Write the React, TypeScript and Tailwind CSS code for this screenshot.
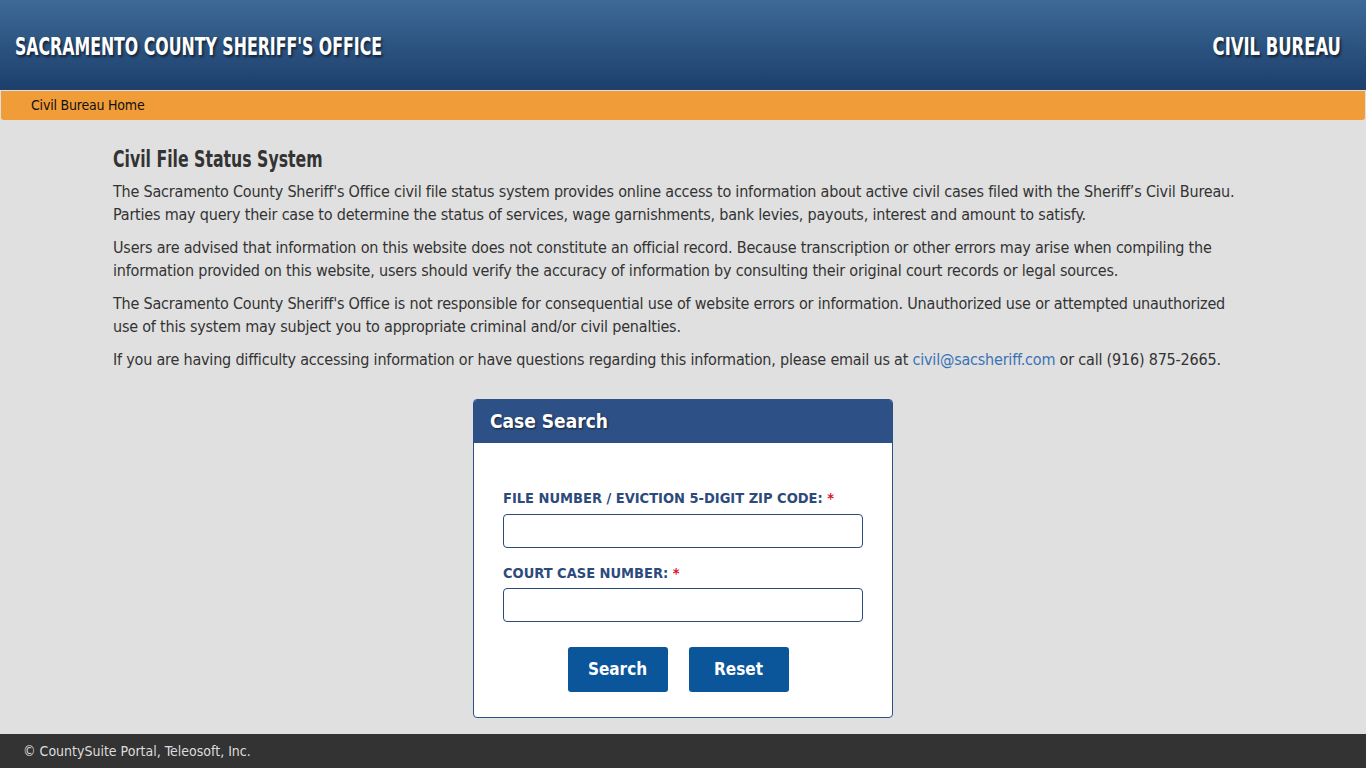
export default function App() {
  const head = { fontFamily: '"DejaVu Sans Condensed", "DejaVu Sans", sans-serif' }
  const body = { fontFamily: '"DejaVu Sans Condensed", "DejaVu Sans", sans-serif' }

  return (
    <div className="min-h-screen flex flex-col bg-[#e0e0e0] text-[#333]" style={body}>
      <header className="h-[90px] flex items-center justify-between px-[15px] pt-[3px] bg-gradient-to-b from-[#3e6a97] to-[#1c3f6c]">
        <div className="inline-block origin-left scale-x-[0.73] whitespace-nowrap text-white text-[24px] font-bold [text-shadow:2px_2px_3px_rgba(0,0,0,0.6)]" style={head}>
          SACRAMENTO COUNTY SHERIFF'S OFFICE
        </div>
        <div className="inline-block origin-right scale-x-[0.76] whitespace-nowrap text-white text-[24px] font-bold pr-[13px] [text-shadow:2px_2px_3px_rgba(0,0,0,0.6)]" style={head}>
          CIVIL BUREAU
        </div>
      </header>

      <nav className="mx-[1px] mt-[1px] h-[29px] flex items-center px-[30px] bg-[#f09c39] rounded-b-[3px] text-[14px] tracking-[-0.2px] text-[#111]">
        <a href="#">Civil Bureau Home</a>
      </nav>

      <main className="flex-1 w-[1140px] mx-auto pt-[24px] pb-[16px]">
        <h1 className="inline-block origin-left scale-x-[0.76] whitespace-nowrap text-[23px] font-bold text-[#333] leading-[30px] mb-[6px]" style={head}>
          Civil File Status System
        </h1>
        <p className="text-[16px] tracking-[-0.2px] leading-[23px] mb-[10px]">
          The Sacramento County Sheriff's Office civil file status system provides online access to information about active civil cases filed with the Sheriff’s Civil Bureau. Parties may query their case to determine the status of services, wage garnishments, bank levies, payouts, interest and amount to satisfy.
        </p>
        <p className="text-[16px] tracking-[-0.2px] leading-[23px] mb-[10px]">
          Users are advised that information on this website does not constitute an official record. Because transcription or other errors may arise when compiling the information provided on this website, users should verify the accuracy of information by consulting their original court records or legal sources.
        </p>
        <p className="text-[16px] tracking-[-0.2px] leading-[23px] mb-[10px]">
          The Sacramento County Sheriff's Office is not responsible for consequential use of website errors or information. Unauthorized use or attempted unauthorized use of this system may subject you to appropriate criminal and/or civil penalties.
        </p>
        <p className="text-[16px] tracking-[-0.2px] leading-[23px]">
          If you are having difficulty accessing information or have questions regarding this information, please email us at{' '}
          <a href="#" className="text-[#3a73b5]">civil@sacsheriff.com</a> or call (916) 875-2665.
        </p>

        <div className="w-[420px] mx-auto mt-[28px] rounded-[4px] border border-[#2d5087] bg-white overflow-hidden">
          <div className="h-[43px] bg-[#2d5087] flex items-center px-[16px] text-white text-[19px] font-bold [text-shadow:1px_1px_2px_rgba(0,0,0,0.6)]">
            Case Search
          </div>
          <div className="px-[29px] pt-[46px] pb-[25px]">
            <label className="block text-[14.5px] leading-[18px] font-bold text-[#2c4a7c] mb-[7px]">
              FILE NUMBER / EVICTION 5-DIGIT ZIP CODE: <span className="text-[#e0102b]">*</span>
            </label>
            <input className="block w-[360px] h-[34px] rounded-[4px] border border-[#2c4a7c] bg-white mb-[16px]" />
            <label className="block text-[14.5px] leading-[18px] font-bold text-[#2c4a7c] mb-[6px]">
              COURT CASE NUMBER: <span className="text-[#e0102b]">*</span>
            </label>
            <input className="block w-[360px] h-[34px] rounded-[4px] border border-[#2c4a7c] bg-white" />
            <div className="flex justify-center gap-[21px] mt-[25px] pr-[10px]">
              <button className="w-[100px] h-[45px] rounded-[3px] bg-[#0b559b] text-white text-[17px] font-bold">Search</button>
              <button className="w-[100px] h-[45px] rounded-[3px] bg-[#0b559b] text-white text-[17px] font-bold">Reset</button>
            </div>
          </div>
        </div>
      </main>

      <footer className="h-[34px] bg-[#333] flex items-center px-[23px] text-[14px] text-[#ddd]">
        © CountySuite Portal, Teleosoft, Inc.
      </footer>
    </div>
  )
}
